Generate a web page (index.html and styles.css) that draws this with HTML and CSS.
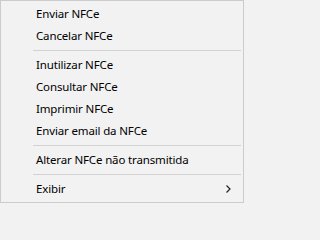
FILE: index.html
```html
<!DOCTYPE html>
<html>
<head>
<meta charset="utf-8">
<link rel="stylesheet" href="styles.css">
</head>
<body>
<div class="menu">
  <div class="item">Enviar NFCe</div>
  <div class="item">Cancelar NFCe</div>
  <div class="sep"></div>
  <div class="item">Inutilizar NFCe</div>
  <div class="item">Consultar NFCe</div>
  <div class="item">Imprimir NFCe</div>
  <div class="item">Enviar email da NFCe</div>
  <div class="sep"></div>
  <div class="item">Alterar NFCe não transmitida</div>
  <div class="sep"></div>
  <div class="item sub"><span>Exibir</span>
    <svg class="arrow" width="5" height="8" viewBox="0 0 5 8"><path d="M0.5 0.5 L4 4 L0.5 7.5" fill="none" stroke="#222" stroke-width="1.2"/></svg>
  </div>
</div>
</body>
</html>
```

FILE: styles.css
```css
html, body {
  margin: 0;
  padding: 0;
  background: #f2f2f2;
}
.menu {
  width: 244px;
  height: 203px;
  box-sizing: border-box;
  border: 1px solid #cccccc;
  background: #f2f2f2;
  padding: 2px 2px;
  display: flex;
  flex-direction: column;
  font-family: "Noto Sans", "Open Sans", sans-serif;
  font-size: 11.5px;
  letter-spacing: -0.15px;
  color: #000;
}
.item {
  height: 22px;
  line-height: 22px;
  padding-left: 33px;
  display: flex;
  align-items: center;
  justify-content: space-between;
  padding-right: 10px;
  white-space: nowrap;
}
.sep {
  height: 7px;
  display: flex;
  align-items: center;
  padding-left: 30px;
}
.sep::before {
  content: "";
  flex: 1;
  height: 1px;
  background: #d2d2d2;
}
.arrow {
  display: block;
}
```
